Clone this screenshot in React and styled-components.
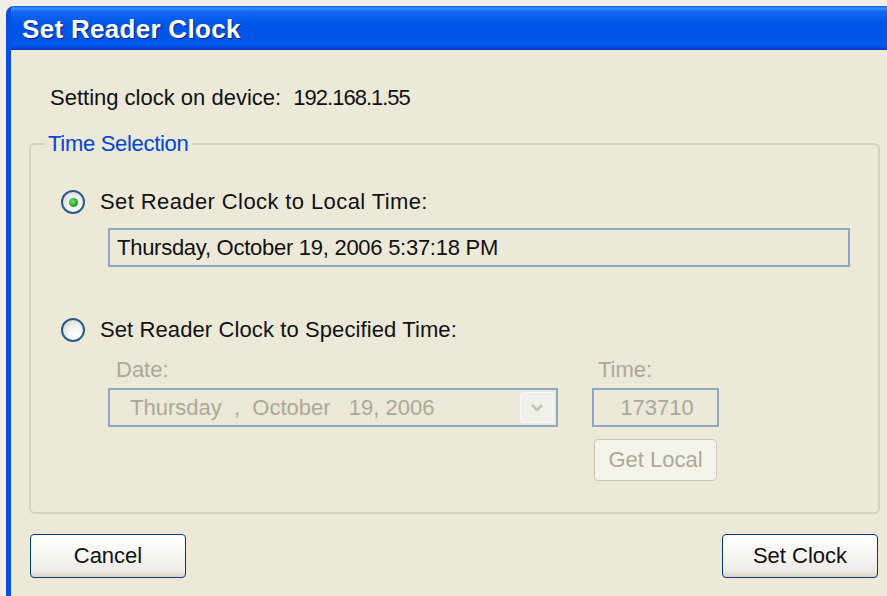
import styled, { createGlobalStyle } from 'styled-components';

const GlobalStyle = createGlobalStyle`
  html, body {
    margin: 0;
    padding: 0;
  }
  body {
    background: #f1efe7;
    font-family: "Liberation Sans", Arial, sans-serif;
    overflow: hidden;
  }
`;

const Window = styled.div`
  margin: 6px 0 0 6px;
  height: 590px;
  display: flex;
  flex-direction: column;
  border-left: 5px solid #0a4ee4;
  border-top-left-radius: 8px;
  overflow: hidden;
  background: #ece9d8;
`;

const TitleBar = styled.div`
  height: 44px;
  flex: none;
  display: flex;
  align-items: center;
  padding: 3px 0 0 11px;
  box-sizing: border-box;
  background: linear-gradient(
    to bottom,
    #0a5ae6 0%,
    #3d8ef8 5%,
    #1467f2 12%,
    #0056e8 40%,
    #0055e6 75%,
    #005af2 88%,
    #0046d8 96%,
    #0034b4 100%
  );
  color: #fff;
  font-size: 26px;
  font-weight: bold;
  letter-spacing: 0.3px;
  text-shadow: 1px 1px 1px #0b1f8c;
`;

const Body = styled.div`
  flex: 1;
  display: flex;
  flex-direction: column;
  padding: 0 7px 0 18px;
  font-size: 22px;
  line-height: 26px;
  color: #111;
`;

const InfoLabel = styled.div`
  margin: 35px 0 0 21px;
`;

const Address = styled.span`
  letter-spacing: -1px;
`;

const Group = styled.fieldset`
  margin: 20px 0 0;
  padding: 0;
  min-width: 0;
  border: 2px solid #d3d1c2;
  border-radius: 6px;
`;

const Legend = styled.legend`
  margin-left: 14px;
  padding: 0 3px;
  color: #0046d5;
  line-height: 26px;
  letter-spacing: -0.3px;
`;

const GroupContent = styled.div`
  display: flex;
  flex-direction: column;
  padding: 32px 28px 31px 30px;
`;

const RadioRow = styled.div`
  display: flex;
  align-items: center;
  gap: 15px;
  height: 26px;
  margin-top: ${p => p.$offset || 0}px;
`;

const RadioLabel = styled.span`
  letter-spacing: ${p => p.$spacing ?? 0.4}px;
`;

const Radio = styled.span`
  width: 24px;
  height: 24px;
  box-sizing: border-box;
  border-radius: 50%;
  border: 2px solid #2b5b88;
  background: radial-gradient(circle at 65% 70%, #ffffff 0%, #f4f4f0 40%, #d2d2c8 100%);
  display: flex;
  align-items: center;
  justify-content: center;

  &::after {
    content: "";
    display: ${p => (p.$checked ? 'block' : 'none')};
    width: 9px;
    height: 9px;
    border-radius: 50%;
    background: radial-gradient(circle at 40% 40%, #72e272 0%, #22a822 60%, #168a16 100%);
  }
`;

const ReadOnlyBox = styled.div`
  margin: 13px 0 0 47px;
  height: 39px;
  box-sizing: border-box;
  border: 2px solid #8fa7c3;
  padding-left: 7px;
  display: flex;
  align-items: center;
  white-space: pre;
  letter-spacing: -0.27px;
`;

const Specified = styled.div`
  display: flex;
  gap: 34px;
  margin: 14px 0 0 47px;
`;

const Column = styled.div`
  width: ${p => p.$width}px;
  display: flex;
  flex-direction: column;
`;

const FieldLabel = styled.div`
  color: #aca899;
  margin-left: ${p => p.$indent}px;
  height: 26px;
`;

const Combo = styled.div`
  margin-top: 5px;
  height: 39px;
  box-sizing: border-box;
  border: 2px solid #8fa7c3;
  display: flex;
  align-items: center;
  justify-content: space-between;
  padding: 0 2px 0 20px;
  color: #aca899;
  white-space: pre;
`;

const DropButton = styled.span`
  width: 34px;
  height: 31px;
  box-sizing: border-box;
  border: 1px solid #f8f8f4;
  border-radius: 2px;
  background: #f1f0ea;
  display: flex;
  align-items: center;
  justify-content: center;
`;

const TimeBox = styled.div`
  margin-top: 5px;
  height: 39px;
  box-sizing: border-box;
  border: 2px solid #8fa7c3;
  display: flex;
  align-items: center;
  justify-content: center;
  padding-left: 3px;
  color: #aca899;
`;

const Button = styled.button`
  width: ${p => p.$width || 156}px;
  height: ${p => p.$height || 44}px;
  margin: ${p => p.$margin || 0};
  box-sizing: border-box;
  border: 1px solid ${p => (p.disabled ? '#c9c7ba' : '#003c74')};
  border-radius: 4px;
  background: ${p =>
    p.disabled
      ? '#f5f4ea'
      : 'linear-gradient(to bottom, #ffffff 0%, #f7f7f4 40%, #ecebe6 85%, #d9d4c8 100%)'};
  color: ${p => (p.disabled ? '#aca899' : '#111')};
  font-family: inherit;
  font-size: 22px;
  padding: 0;
  cursor: default;
`;

const Footer = styled.div`
  display: flex;
  justify-content: space-between;
  margin-top: 20px;
  padding: 0 2px 0 1px;
`;

function Chevron() {
  return (
    <svg width="14" height="9" viewBox="0 0 14 9">
      <path d="M2 2 L7 7 L12 2" fill="none" stroke="#c4c2b4" strokeWidth="2.6" />
    </svg>
  );
}

export default function App() {
  return (
    <>
      <GlobalStyle />
      <Window>
        <TitleBar>Set Reader Clock</TitleBar>
        <Body>
          <InfoLabel>
            Setting clock on device:&nbsp; <Address>192.168.1.55</Address>
          </InfoLabel>

          <Group>
            <Legend>Time Selection</Legend>
            <GroupContent>
              <RadioRow>
                <Radio $checked />
                <RadioLabel>Set Reader Clock to Local Time:</RadioLabel>
              </RadioRow>
              <ReadOnlyBox>Thursday, October 19, 2006 5:37:18 PM</ReadOnlyBox>

              <RadioRow $offset={50}>
                <Radio />
                <RadioLabel $spacing={0.1}>Set Reader Clock to Specified Time:</RadioLabel>
              </RadioRow>

              <Specified>
                <Column $width={450}>
                  <FieldLabel $indent={8}>Date:</FieldLabel>
                  <Combo>
                    <span>{'Thursday  ,  October   19, 2006'}</span>
                    <DropButton>
                      <Chevron />
                    </DropButton>
                  </Combo>
                </Column>
                <Column $width={127}>
                  <FieldLabel $indent={6}>Time:</FieldLabel>
                  <TimeBox>173710</TimeBox>
                  <Button disabled $width={123} $height={42} $margin="12px 0 0 2px">
                    Get Local
                  </Button>
                </Column>
              </Specified>
            </GroupContent>
          </Group>

          <Footer>
            <Button>Cancel</Button>
            <Button>Set Clock</Button>
          </Footer>
        </Body>
      </Window>
    </>
  );
}
